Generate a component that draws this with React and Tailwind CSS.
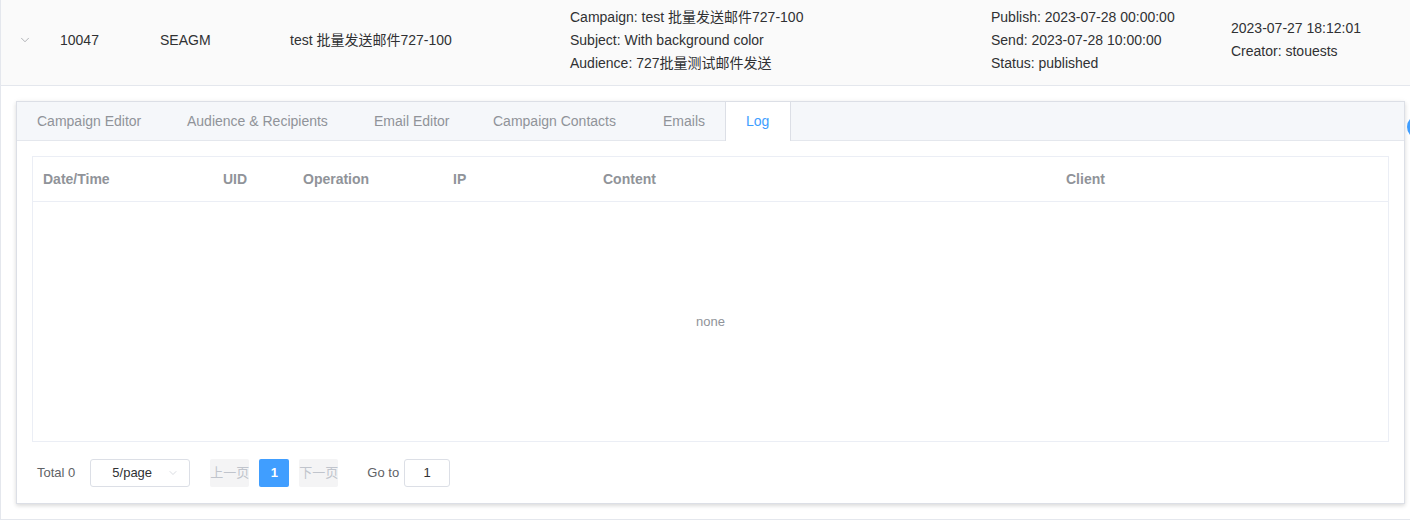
import { ChevronDown } from 'lucide-react';

const font = "font-['Liberation_Sans','Noto_Sans_CJK_SC',sans-serif]";

const tabs = [
  { label: 'Campaign Editor', w: 'w-[150px]' },
  { label: 'Audience & Recipients', w: 'w-[187px]' },
  { label: 'Email Editor', w: 'w-[119px]' },
  { label: 'Campaign Contacts', w: 'w-[170px]' },
  { label: 'Emails', w: 'w-[83px]' },
];
const columns = ['Date/Time', 'UID', 'Operation', 'IP', 'Content', 'Client'];

function SummaryRow() {
  return (
    <div className="flex h-[86px] items-center border-b border-[#e4e7ed] bg-[#fafafa] pb-[5px] text-[14px] text-[#303133]">
      <div className="flex w-[48px] justify-center">
        <ChevronDown size={14} strokeWidth={1.2} className="text-[#909399]" />
      </div>
      <div className="w-[111px] pl-[11px]">10047</div>
      <div className="w-[130px]">SEAGM</div>
      <div className="w-[280px]">test 批量发送邮件727-100</div>
      <div className="w-[421px] leading-[23px]">
        <div>Campaign: test 批量发送邮件727-100</div>
        <div>Subject: With background color</div>
        <div>Audience: 727批量测试邮件发送</div>
      </div>
      <div className="w-[240px] leading-[23px]">
        <div>Publish: 2023-07-28 00:00:00</div>
        <div>Send: 2023-07-28 10:00:00</div>
        <div>Status: published</div>
      </div>
      <div className="leading-[23px]">
        <div>2023-07-27 18:12:01</div>
        <div>Creator: stouests</div>
      </div>
    </div>
  );
}

function Tabs() {
  return (
    <div className="flex h-[39px] border-b border-[#e4e7ed] bg-[#f5f7fa]">
      {tabs.map((t) => (
        <div key={t.label} className={`h-[38px] ${t.w} pl-5 text-[14px] leading-[38px] text-[#909399]`}>
          {t.label}
        </div>
      ))}
      <div className="-mb-px -ml-px h-[39px] w-[66px] border-x border-[#dcdfe6] bg-white pl-5 text-[14px] leading-[38px] text-[#409eff]">
        Log
      </div>
    </div>
  );
}

function LogTable() {
  return (
    <div className="border border-[#ebeef5]">
      <div className="grid h-[45px] grid-cols-[180px_80px_150px_150px_463px_1fr] items-center border-b border-[#ebeef5] text-[14px] font-bold text-[#909399]">
        {columns.map((c) => (
          <div key={c} className="pl-[10px]">
            {c}
          </div>
        ))}
      </div>
      <div className="flex h-[239px] items-center justify-center text-[13px] text-[#909399]">none</div>
    </div>
  );
}

function Pagination() {
  return (
    <div className="mt-[17px] flex h-[28px] items-center pl-[5px] text-[13px] text-[#606266]">
      <span className="mr-[15px]">Total 0</span>
      <div className="relative flex h-[28px] w-[100px] items-center rounded-[3px] border border-[#dcdfe6] text-[#303133]">
        <span className="ml-[21px]">5/page</span>
        <ChevronDown size={12} strokeWidth={1.2} className="absolute right-[10px] text-[#c0c4cc]" />
      </div>
      <div className="ml-[20px] flex h-[28px] w-[39px] items-center justify-center rounded-[2px] bg-[#f4f4f5] text-[#c0c4cc]">
        上一页
      </div>
      <div className="ml-[10px] flex h-[28px] w-[30px] items-center justify-center rounded-[2px] bg-[#409eff] font-bold text-white">
        1
      </div>
      <div className="ml-[10px] flex h-[28px] w-[39px] items-center justify-center rounded-[2px] bg-[#f4f4f5] text-[#c0c4cc]">
        下一页
      </div>
      <span className="ml-[29px] mr-[5px]">Go to</span>
      <div className="flex h-[28px] w-[46px] items-center justify-center rounded-[3px] border border-[#dcdfe6] text-[#303133]">
        1
      </div>
    </div>
  );
}

export default function App() {
  return (
    <div className={`relative h-[523px] w-[1410px] overflow-hidden bg-white ${font}`}>
      <div className="w-[1420px] border-l border-[#e4e7ed]">
        <SummaryRow />
        <div className="border-b border-[#e4e7ed] px-[15px] pb-[15px] pt-[15px]">
          <div className="h-[403px] border border-[#dcdfe6] bg-white shadow-[0_2px_4px_rgba(0,0,0,0.12),0_0_6px_rgba(0,0,0,0.04)]">
            <Tabs />
            <div className="px-[15px] pt-[15px]">
              <LogTable />
              <Pagination />
            </div>
          </div>
        </div>
      </div>
      <div className="absolute left-[1407px] top-[115px] h-[24px] w-[24px] rounded-full bg-[#409eff]" />
    </div>
  );
}
